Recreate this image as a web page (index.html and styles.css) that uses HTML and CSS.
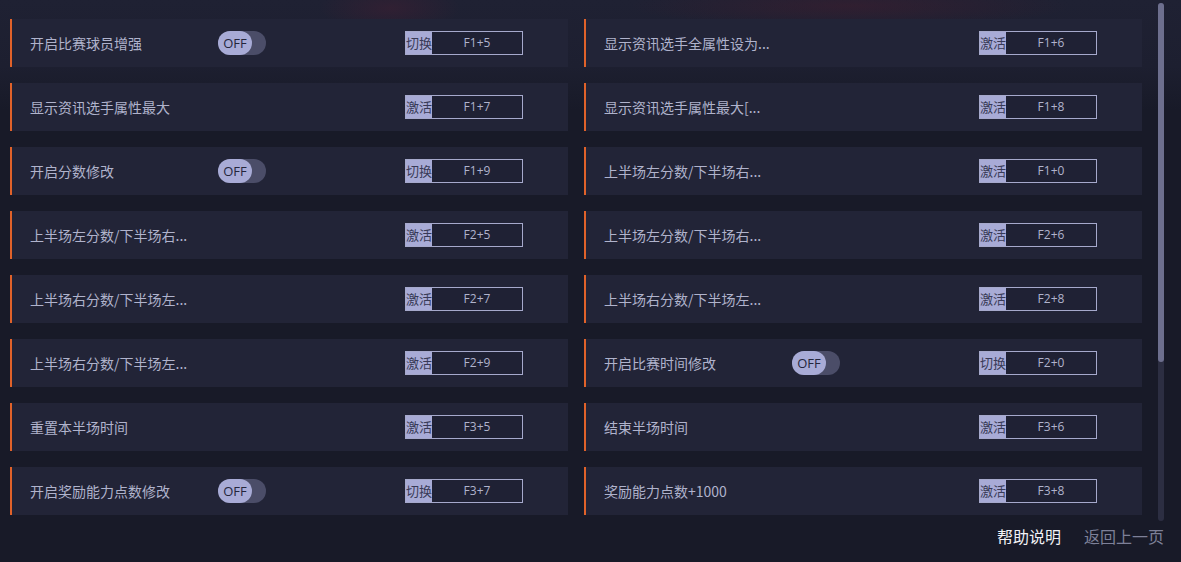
FILE: index.html
```html
<!DOCTYPE html>
<html lang="zh">
<head>
<meta charset="utf-8">
<link rel="stylesheet" href="styles.css">
</head>
<body>
<div class="page">
  <div class="bg-top"></div>
  <div class="grid">
    <div class="card"><span class="name">开启比赛球员增强</span><span class="toggle"><span class="knob">OFF</span></span><span class="hk"><span class="lbl">切换</span><span class="key">F1+5</span></span></div>
    <div class="card"><span class="name">显示资讯选手全属性设为...</span><span class="hk"><span class="lbl">激活</span><span class="key">F1+6</span></span></div>
    <div class="card"><span class="name">显示资讯选手属性最大</span><span class="hk"><span class="lbl">激活</span><span class="key">F1+7</span></span></div>
    <div class="card"><span class="name">显示资讯选手属性最大[...</span><span class="hk"><span class="lbl">激活</span><span class="key">F1+8</span></span></div>
    <div class="card"><span class="name">开启分数修改</span><span class="toggle"><span class="knob">OFF</span></span><span class="hk"><span class="lbl">切换</span><span class="key">F1+9</span></span></div>
    <div class="card"><span class="name">上半场左分数/下半场右...</span><span class="hk"><span class="lbl">激活</span><span class="key">F1+0</span></span></div>
    <div class="card"><span class="name">上半场左分数/下半场右...</span><span class="hk"><span class="lbl">激活</span><span class="key">F2+5</span></span></div>
    <div class="card"><span class="name">上半场左分数/下半场右...</span><span class="hk"><span class="lbl">激活</span><span class="key">F2+6</span></span></div>
    <div class="card"><span class="name">上半场右分数/下半场左...</span><span class="hk"><span class="lbl">激活</span><span class="key">F2+7</span></span></div>
    <div class="card"><span class="name">上半场右分数/下半场左...</span><span class="hk"><span class="lbl">激活</span><span class="key">F2+8</span></span></div>
    <div class="card"><span class="name">上半场右分数/下半场左...</span><span class="hk"><span class="lbl">激活</span><span class="key">F2+9</span></span></div>
    <div class="card"><span class="name">开启比赛时间修改</span><span class="toggle"><span class="knob">OFF</span></span><span class="hk"><span class="lbl">切换</span><span class="key">F2+0</span></span></div>
    <div class="card"><span class="name">重置本半场时间</span><span class="hk"><span class="lbl">激活</span><span class="key">F3+5</span></span></div>
    <div class="card"><span class="name">结束半场时间</span><span class="hk"><span class="lbl">激活</span><span class="key">F3+6</span></span></div>
    <div class="card"><span class="name">开启奖励能力点数修改</span><span class="toggle"><span class="knob">OFF</span></span><span class="hk"><span class="lbl">切换</span><span class="key">F3+7</span></span></div>
    <div class="card"><span class="name">奖励能力点数+1000</span><span class="hk"><span class="lbl">激活</span><span class="key">F3+8</span></span></div>
  </div>
  <div class="scrollbar"><div class="thumb"></div></div>
  <div class="footer"><span class="help">帮助说明</span><span class="back">返回上一页</span></div>
</div>
</body>
</html>
```
FILE: styles.css
```css
* { box-sizing: border-box; }
html, body { margin: 0; padding: 0; }
body {
  width: 1181px;
  height: 562px;
  overflow: hidden;
  background: #181a28;
  font-family: "Noto Sans CJK SC", "Noto Sans", sans-serif;
}
.page {
  position: relative;
  width: 1181px;
  height: 562px;
  padding: 19px 0 0 10px;
}
.bg-top {
  position: absolute;
  left: 0; top: 0;
  width: 1181px; height: 110px;
  background:
    radial-gradient(ellipse 70px 25px at 390px 8px, rgba(70,30,50,0.45), transparent),
    radial-gradient(ellipse 220px 22px at 850px 6px, rgba(70,28,45,0.45), transparent),
    linear-gradient(#1f2133, #1d1f30 60%, #181a28);
  z-index: 0;
}
.grid {
  position: relative;
  z-index: 1;
  display: grid;
  grid-template-columns: 558px 558px;
  column-gap: 16px;
  row-gap: 16px;
  grid-auto-rows: 48px;
}
.card {
  display: flex;
  align-items: center;
  background: #222437;
  border-left: 2px solid #e0622a;
  padding-left: 18px;
  position: relative;
}
.name {
  color: #b0b3cc;
  font-size: 14px;
  width: 188px;
  white-space: nowrap;
}
.toggle {
  width: 48px;
  height: 24px;
  border-radius: 12px;
  background: #4b4d68;
  display: flex;
  align-items: center;
}
.knob {
  width: 34px;
  height: 24px;
  border-radius: 12px;
  background: #a8abd6;
  color: #24263c;
  font-family: "Open Sans", "Noto Sans", sans-serif;
  font-size: 13px;
  display: flex;
  align-items: center;
  justify-content: center;
}
.hk {
  position: absolute;
  left: 393px;
  top: 12px;
  width: 118px;
  height: 24px;
  border: 1px solid #a6a9cc;
  background: #1f2134;
  display: flex;
}
.lbl {
  width: 26px;
  background: #a8abd6;
  color: #383a56;
  font-size: 13px;
  line-height: 22px;
  white-space: nowrap;
  overflow: hidden;
}
.key {
  flex: 1;
  text-align: center;
  color: #b0b3cc;
  font-family: "Open Sans", "Noto Sans", sans-serif;
  font-size: 12px;
  line-height: 22px;
}
.scrollbar {
  position: absolute;
  left: 1158px;
  top: 3px;
  width: 6px;
  height: 518px;
  border-radius: 3px;
  background: #2c2e42;
  z-index: 2;
}
.thumb {
  width: 6px;
  height: 359px;
  border-radius: 3px;
  background: #6d6f8e;
}
.footer {
  position: relative;
  z-index: 1;
  display: flex;
  justify-content: flex-end;
  gap: 23px;
  padding-right: 17px;
  margin-top: 9px;
  font-size: 16px;
  line-height: 24px;
}
.help { color: #f2f2f6; }
.back { color: #7d8098; }
```
